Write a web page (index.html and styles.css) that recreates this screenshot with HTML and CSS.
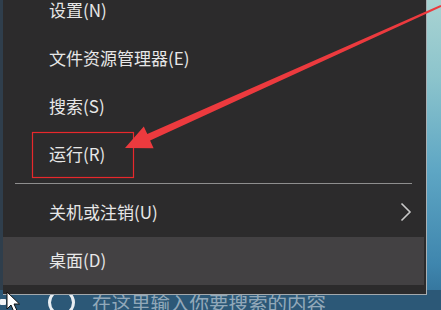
FILE: index.html
```html
<!DOCTYPE html>
<html lang="zh-CN">
<head>
<meta charset="utf-8">
<title>Win+X 菜单</title>
<link rel="stylesheet" href="styles.css">
</head>
<body>
<div class="desktop">
  <div class="taskbar">
    <span class="cortana"></span>
    <span class="search-text">在这里输入你要搜索的内容</span>
  </div>

  <div class="menu">
    <div class="item">设置(N)</div>
    <div class="item">文件资源管理器(E)</div>
    <div class="item">搜索(S)</div>
    <div class="item">运行(R)</div>
    <div class="sep"></div>
    <div class="item">关机或注销(U)
      <svg class="chev" width="12" height="20" viewBox="0 0 12 20"><path d="M1.5 1.5 L10 10 L1.5 18.5" fill="none" stroke="#c9c9c9" stroke-width="1.6"/></svg>
    </div>
    <div class="item active">桌面(D)</div>
  </div>

  <svg class="annot" width="441" height="310" viewBox="0 0 441 310">
    <rect x="32.5" y="132.5" width="101" height="45" fill="none" stroke="#e8282c" stroke-width="1.2"/>
    <polygon points="125,148 153.6,148.2 150.1,140.5 441.4,6.8 440.6,5 147.3,134.1 143.8,126.4" fill="#ec3a3e"/>
  </svg>

  <svg class="cursor" width="16" height="22" viewBox="0 0 16 22">
    <path d="M1 1 L1 18 L5 14 L8 21 L11 19.6 L8 13 L13.5 13 Z" fill="#fff" stroke="#111" stroke-width="1"/>
  </svg>
  <span class="blob"></span>
</div>
</body>
</html>
```

FILE: styles.css
```css
html, body {
  margin: 0;
  padding: 0;
}
body {
  width: 441px;
  height: 310px;
  overflow: hidden;
  font-family: "Noto Sans CJK SC", "Noto Sans", sans-serif;
}
.desktop {
  position: relative;
  width: 441px;
  height: 310px;
  overflow: hidden;
  display: flex;
  flex-direction: column;
  justify-content: flex-end;
  background:
    linear-gradient(to right, #2f3e4c 0 3px, transparent 3px),
    linear-gradient(to bottom, #a9d3d2 0%, #8cc4cc 25%, #5ea6c4 55%, #3f86ae 85%, #2f6c94 100%);
}
.taskbar {
  height: 20px;
  background: #2c5877;
  display: flex;
  align-items: center;
  padding-left: 48px;
  gap: 17px;
}
.cortana {
  width: 21px;
  height: 21px;
  border: 3px solid #e9eef2;
  border-radius: 50%;
  flex: none;
  margin-top: 4px;
}
.search-text {
  font-size: 19.5px;
  color: rgba(235, 240, 245, 0.55);
  white-space: nowrap;
  line-height: 20px;
  margin-top: 6px;
}
.menu {
  position: absolute;
  left: 3px;
  top: -13px;
  width: 421px;
  padding: 0 2px 9px 0;
  background: #2c2b2c;
  border-right: 1px solid #a9b0b4;
  border-bottom: 1px solid #a3a9ad;
}
.item {
  box-sizing: border-box;
  height: 48px;
  display: flex;
  align-items: center;
  padding-left: 46px;
  padding-bottom: 3px;
  font-size: 17px;
  color: #e7e7e7;
  white-space: nowrap;
}
.item.active {
  background: #434143;
}
.chev {
  margin-left: auto;
  margin-right: 12px;
}
.sep {
  height: 1px;
  margin: 4px 12px 5px 12px;
  background: #8e8e8e;
}
.annot {
  position: absolute;
  left: 0;
  top: 0;
  pointer-events: none;
}
.cursor {
  position: absolute;
  left: 6px;
  top: 291px;
}
.blob {
  position: absolute;
  left: 0;
  top: 299px;
  width: 6px;
  height: 6px;
  background: #f2f4f6;
  border-radius: 1px;
}
```
